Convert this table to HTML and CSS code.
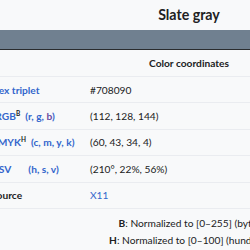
FILE: index.html
```html
<!DOCTYPE html>
<html>
<head>
<meta charset="utf-8">
<link rel="stylesheet" href="styles.css">
</head>
<body>
<div class="infobox">
  <div class="title">Slate gray</div>
  <div class="swatch"></div>
  <div class="header">Color coordinates</div>
  <div class="row"><div class="label"><a class="link">Hex triplet</a></div><div class="value">#708090</div></div>
  <div class="row"><div class="label"><a class="link">sRGB</a><sup>B</sup>&nbsp;&nbsp;<span class="link">(<span class="it">r</span>, <span class="it">g</span>, <span class="visited">b</span>)</span></div><div class="value">(112, 128, 144)</div></div>
  <div class="row"><div class="label"><a class="link">CMYK</a><sup>H</sup>&nbsp;&nbsp;<span class="link">(c, m, y, k)</span></div><div class="value">(60, 43, 34, 4)</div></div>
  <div class="row"><div class="label"><a class="link">HSV</a>&nbsp;&nbsp;&nbsp;&nbsp;&nbsp;&nbsp;&nbsp;<span class="link">(h, s, v)</span></div><div class="value">(210°, 22%, 56%)</div></div>
  <div class="row"><div class="label">Source</div><div class="value"><a class="plain">X11</a></div></div>
  <div class="notes">
    <div><b>B</b>: Normalized to [0–255] (byte)</div>
    <div><b>H</b>: Normalized to [0–100] (hundred)</div>
  </div>
</div>
</body>
</html>
```

FILE: styles.css
```css
html, body {
  margin: 0;
  padding: 0;
  background: #f8f9fa;
}
.infobox {
  width: 404px;
  margin-left: -13px;
  font-family: Lato, "DejaVu Sans", sans-serif;
  font-size: 10.2px;
  color: #202122;
  background: #f8f9fa;
}
.title {
  height: 30px;
  display: flex;
  align-items: center;
  justify-content: center;
  font-size: 14.2px;
  font-weight: bold;
  padding-bottom: 2px;
  box-sizing: border-box;
}
.swatch {
  height: 19px;
  background: #708090;
  border-bottom: 1px solid #2a2c2e;
}
.header {
  height: 27px;
  display: flex;
  align-items: center;
  justify-content: center;
  font-weight: bold;
  border-bottom: 1px solid #eaecf0;
  box-sizing: border-box;
}
.row {
  display: flex;
  height: 26.4px;
  align-items: center;
  border-bottom: 1px solid #eaecf0;
  box-sizing: border-box;
}
.label {
  width: 99px;
  padding-left: 4px;
  font-weight: bold;
  white-space: nowrap;
}
.value {
  padding-left: 0;
}
.link { color: #3366cc; }
.visited { color: #6b4ba1; }
.plain { color: #3366cc; }
sup {
  font-size: 6.5px;
  line-height: 0;
  vertical-align: 4px;
}
.notes {
  padding-top: 6px;
  text-align: center;
  line-height: 17px;
}
.notes b { font-weight: bold; }
```
